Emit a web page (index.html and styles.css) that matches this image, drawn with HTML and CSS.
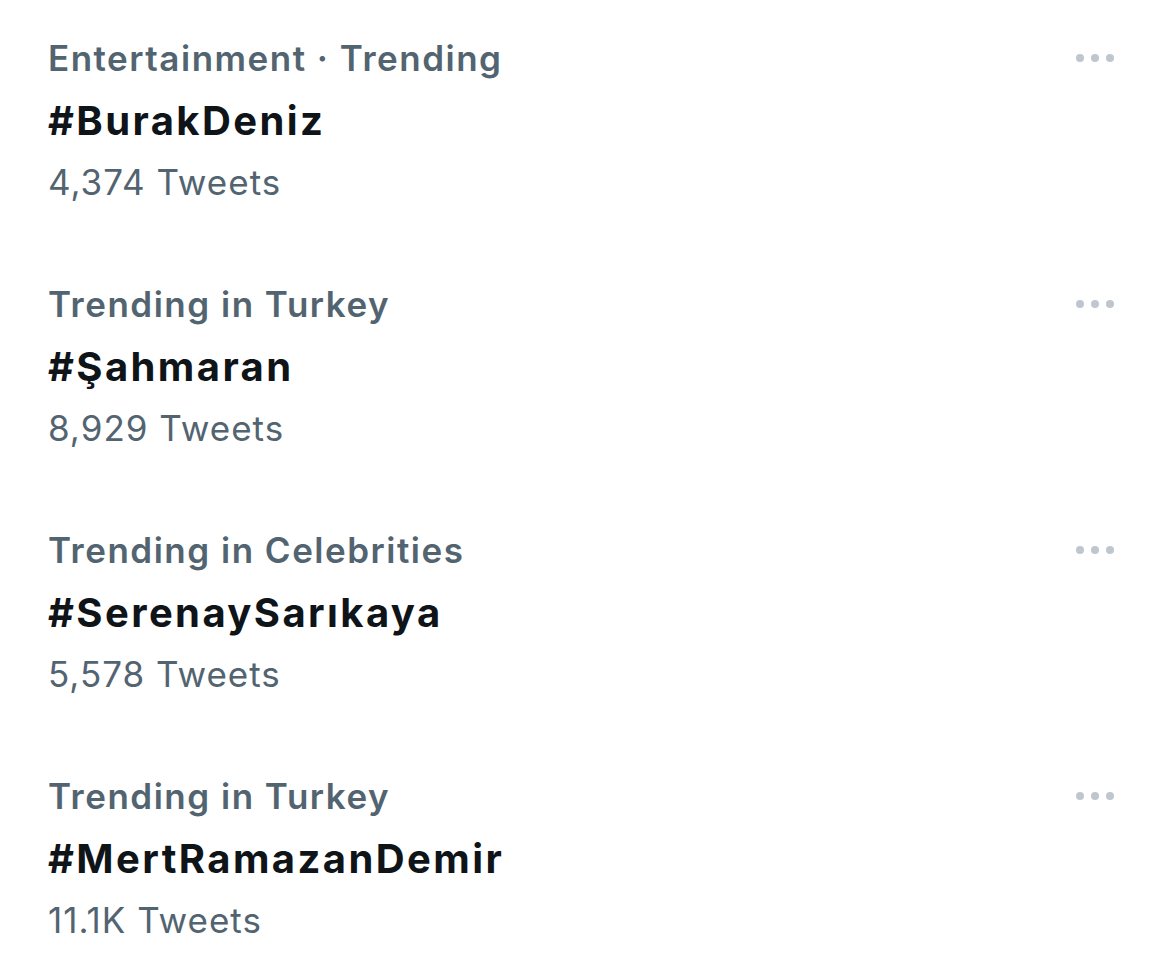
FILE: index.html
```html
<!DOCTYPE html>
<html>
<head>
<meta charset="utf-8">
<link rel="stylesheet" href="styles.css">
</head>
<body>
<div class="list">
  <div class="trend">
    <div class="text">
      <div class="cat">Entertainment · Trending</div>
      <div class="tag">#BurakDeniz</div>
      <div class="count">4,374 Tweets</div>
    </div>
    <div class="more"><span></span><span></span><span></span></div>
  </div>
  <div class="trend">
    <div class="text">
      <div class="cat">Trending in Turkey</div>
      <div class="tag">#Şahmaran</div>
      <div class="count">8,929 Tweets</div>
    </div>
    <div class="more"><span></span><span></span><span></span></div>
  </div>
  <div class="trend">
    <div class="text">
      <div class="cat">Trending in Celebrities</div>
      <div class="tag">#SerenaySarıkaya</div>
      <div class="count">5,578 Tweets</div>
    </div>
    <div class="more"><span></span><span></span><span></span></div>
  </div>
  <div class="trend">
    <div class="text">
      <div class="cat">Trending in Turkey</div>
      <div class="tag">#MertRamazanDemir</div>
      <div class="count">11.1K Tweets</div>
    </div>
    <div class="more"><span></span><span></span><span></span></div>
  </div>
</div>
</body>
</html>
```
FILE: styles.css
```css
html, body {
  margin: 0;
  padding: 0;
  background: #ffffff;
}
body {
  font-family: Inter, "Noto Sans", sans-serif;
}
.list {
  display: flex;
  flex-direction: column;
  padding-left: 48px;
  padding-right: 56px;
}
.trend {
  height: 246px;
  box-sizing: border-box;
  padding-top: 27px;
  display: flex;
  justify-content: space-between;
  align-items: flex-start;
}
.text {
  display: flex;
  flex-direction: column;
}
.cat {
  font-size: 35px;
  font-weight: 600;
  color: #536471;
  line-height: 62px;
  letter-spacing: 1.5px;
}
.tag {
  font-size: 40px;
  font-weight: 700;
  color: #0f1419;
  line-height: 63px;
  letter-spacing: 2.4px;
}
.count {
  font-size: 35px;
  font-weight: 400;
  color: #536471;
  line-height: 60px;
  letter-spacing: 1px;
}
.more {
  display: flex;
  gap: 7px;
  margin-top: 27px;
}
.more span {
  width: 8px;
  height: 8px;
  border-radius: 50%;
  background: #bfc6cd;
}
```
